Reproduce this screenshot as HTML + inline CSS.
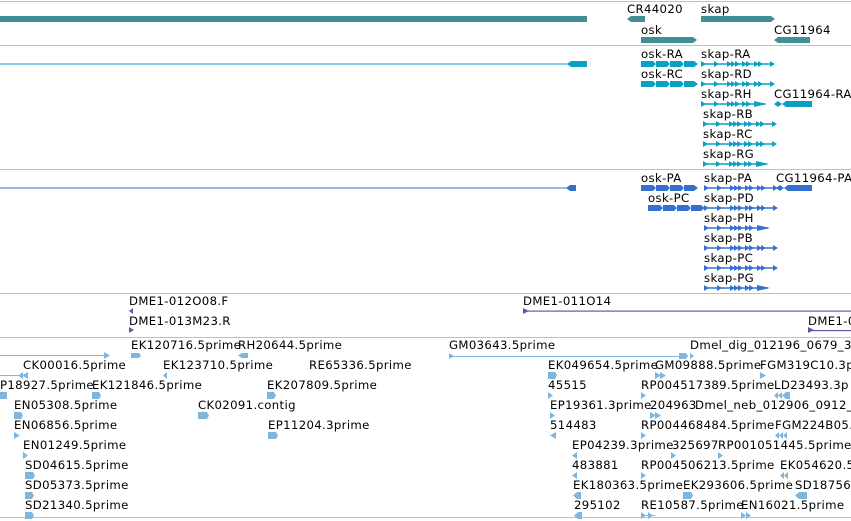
<!DOCTYPE html>
<html><head><meta charset="utf-8"><style>
html,body{margin:0;padding:0;background:#fff;width:851px;height:521px;overflow:hidden}
svg{display:block}
text{font-family:"DejaVu Sans","Liberation Sans",sans-serif;font-size:11.7px;letter-spacing:0.35px;fill:#000}
</style></head><body>
<svg width="851" height="521" viewBox="0 0 851 521" xmlns="http://www.w3.org/2000/svg">
<defs>
<g id="sk">
<line x1="0" y1="0" x2="72" y2="0" stroke-width="1.4" stroke="currentColor"/>
<polygon points="0,-3 5,0 0,3"/><polygon points="13,-3 18,0 13,3"/>
<polygon points="26,-3 31,0 26,3"/><polygon points="30,-3 35,0 30,3"/><polygon points="34,-3 39,0 34,3"/>
<polygon points="41,-3 46,0 41,3"/><polygon points="45,-3 50,0 45,3"/>
<polygon points="53,-3 58,0 53,3"/><polygon points="57,-3 62,0 57,3"/>
<polygon points="69,-3 74,0 69,3"/>
</g>
<g id="skh">
<line x1="0" y1="0" x2="64" y2="0" stroke-width="1.4" stroke="currentColor"/>
<polygon points="0,-3 5,0 0,3"/><polygon points="13,-3 18,0 13,3"/>
<polygon points="26,-3 31,0 26,3"/><polygon points="30,-3 35,0 30,3"/><polygon points="34,-3 39,0 34,3"/>
<polygon points="41,-3 46,0 41,3"/><polygon points="45,-3 50,0 45,3"/>
<polygon points="53,-3 66,0 53,3"/>
</g>
<g id="os">
<polygon points="0,-3 12,-3 15,0 12,3 0,3"/><polygon points="15,-3 26,-3 29,0 26,3 15,3"/>
<polygon points="29,-3 40,-3 43,0 40,3 29,3"/><polygon points="43,-3 53,-3 57,0 53,3 43,3"/>
</g>
</defs>
<g stroke="#c0c0c0" stroke-width="1">
<line x1="0" y1="1.5" x2="851" y2="1.5"/><line x1="0" y1="45.5" x2="851" y2="45.5"/>
<line x1="0" y1="169.5" x2="851" y2="169.5"/><line x1="0" y1="293.5" x2="851" y2="293.5"/>
<line x1="0" y1="337.5" x2="851" y2="337.5"/><line x1="0" y1="517.5" x2="851" y2="517.5"/>
</g>
<g fill="#428f93">
<rect x="0" y="16" width="587" height="6"/>
<polygon points="627,19 631,16 645,16 645,22 631,22"/>
<polygon points="701,16 771,16 775,19 771,22 701,22"/>
<polygon points="641,37 693,37 697,40 693,43 641,43"/>
<polygon points="774,40 778,37 810,37 810,43 778,43"/>
</g>
<text x="627" y="13">CR44020</text><text x="701" y="13">skap</text>
<text x="641" y="34">osk</text><text x="774" y="34">CG11964</text>
<g fill="#0aa0c4" color="#0aa0c4">
<rect x="0" y="63.5" width="570" height="1"/>
<polygon points="567,64 571,61 587,61 587,67 571,67"/>
<use href="#os" x="641" y="64"/><use href="#os" x="641" y="84"/>
<use href="#sk" x="701" y="64"/><use href="#sk" x="701" y="84"/>
<use href="#skh" x="701" y="104"/><use href="#sk" x="703" y="124"/>
<use href="#sk" x="703" y="144"/><use href="#skh" x="703" y="164"/>
<polygon points="774,104 778,101 782,104 786,101 812,101 812,107 786,107 782,104 778,107"/>
</g>
<text x="641" y="58">osk-RA</text><text x="641" y="78">osk-RC</text>
<text x="701" y="58">skap-RA</text><text x="701" y="78">skap-RD</text>
<text x="701" y="98">skap-RH</text><text x="703" y="118">skap-RB</text>
<text x="703" y="138">skap-RC</text><text x="703" y="158">skap-RG</text>
<text x="774" y="98">CG11964-RA</text>
<g fill="#3572d0" color="#3572d0">
<rect x="0" y="187.5" width="570" height="1"/>
<polygon points="566,188 570,185 576,185 576,191 570,191"/>
<use href="#os" x="641" y="188"/><use href="#os" x="648" y="208"/>
<use href="#sk" x="704" y="188"/><use href="#sk" x="704" y="208"/>
<use href="#skh" x="704" y="228"/><use href="#sk" x="704" y="248"/>
<use href="#sk" x="704" y="268"/><use href="#skh" x="704" y="288"/>
<polygon points="776,188 780,185 784,188 788,185 812,185 812,191 788,191 784,188 780,191"/>
</g>
<text x="641" y="182">osk-PA</text><text x="648" y="202">osk-PC</text>
<text x="704" y="182">skap-PA</text><text x="704" y="202">skap-PD</text>
<text x="704" y="222">skap-PH</text><text x="704" y="242">skap-PB</text>
<text x="704" y="262">skap-PC</text><text x="704" y="282">skap-PG</text>
<text x="776" y="182">CG11964-PA</text>
<g fill="#6f52a8">
<polygon points="129,311 133,308 133,314"/>
<polygon points="129,327 134,330 129,333"/>
<polygon points="523,308 529,311 523,314"/><rect x="523" y="310.5" width="328" height="1.2"/>
<polygon points="808,327 814,330 808,333"/><rect x="808" y="330" width="43" height="1.2"/>
</g>
<text x="129" y="305">DME1-012O08.F</text><text x="129" y="325">DME1-013M23.R</text>
<text x="523" y="305">DME1-011O14</text><text x="808" y="325">DME1-0</text>
<g fill="#7fb6de">
<rect x="0" y="355" width="108" height="1"/><polygon points="104,352 110,355.5 104,359"/>
<polygon points="131,353 139,353 141,355.5 139,358 131,358"/>
<polygon points="238,355.5 242,353 248,353 248,358 242,358"/>
<rect x="449" y="356" width="238" height="1"/><polygon points="449,353 454,356 449,359"/>
<polygon points="679,353 686,353 688,356 686,359 679,359"/><polygon points="690,353 694,356 690,359"/>
<rect x="0" y="375" width="28" height="1"/><polygon points="18,375.5 23,372 23,379"/><polygon points="22,375.5 28,372 28,379"/>
<polygon points="163,375.5 167,372 167,379"/>
<polygon points="548,372 555,372 557,375.5 555,379 548,379"/>
<polygon points="655,372 661,375.5 655,379"/><polygon points="660,372 666,375.5 660,379"/>
<polygon points="760,372 766,375.5 760,379"/>
<rect x="0" y="392" width="7" height="7"/>
<polygon points="92,392 99,392 101,395.5 99,399 92,399"/>
<polygon points="267,392 274,392 276,395.5 274,399 267,399"/>
<polygon points="548,392 553,395.5 548,399"/>
<polygon points="641,392 646,395.5 641,399"/>
<polygon points="774,395.5 778,392 778,399"/><polygon points="778,395.5 782,392 782,399"/><polygon points="782,395.5 786,392 790,392 790,399 786,399"/>
<polygon points="14,412 21,412 23,415.5 21,419 14,419"/>
<polygon points="198,412 207,412 209,415.5 207,419 198,419"/>
<polygon points="550,412 555,415.5 550,419"/>
<polygon points="650,412 656,415.5 650,419"/><polygon points="655,412 661,415.5 655,419"/>
<polygon points="14,432 20,435.5 14,439"/>
<polygon points="268,432 276,432 278,435.5 276,439 268,439"/>
<polygon points="550,435.5 556,432 556,439"/>
<polygon points="641,432 646,435.5 641,439"/>
<polygon points="775,435.5 779,432 779,439"/><polygon points="779,435.5 783,432 783,439"/><polygon points="783,435.5 787,432 787,439"/>
<polygon points="23,452 28,455.5 23,459"/>
<polygon points="572,455.5 577,452 577,459"/>
<polygon points="671,452 676,455.5 671,459"/><polygon points="718,452 723,455.5 718,459"/>
<polygon points="25,472 33,472 35,475.5 33,479 25,479"/>
<polygon points="572,475.5 577,472 577,479"/>
<polygon points="641,472 646,475.5 641,479"/>
<polygon points="780,475.5 784,472 784,479"/><polygon points="784,475.5 788,472 788,479"/>
<polygon points="25,492 32,492 34,495.5 32,499 25,499"/>
<polygon points="573,495.5 577,492 581,492 581,499 577,499"/>
<polygon points="683,492 691,492 693,495.5 691,499 683,499"/>
<polygon points="795,495.5 799,492 807,492 807,499 799,499"/>
<polygon points="25,512 32,512 34,515.5 32,519 25,519"/>
<polygon points="574,515.5 578,512 582,512 582,519 578,519"/>
<rect x="641" y="515" width="14" height="1"/><polygon points="641,512 646,515.5 641,519"/><polygon points="648,512 653,515.5 648,519"/>
<polygon points="741,512 746,515.5 741,519"/><polygon points="746,512 751,515.5 746,519"/>
</g>
<text x="131" y="349">EK120716.5prime</text><text x="238" y="349">RH20644.5prime</text>
<text x="449" y="349">GM03643.5prime</text><text x="690" y="349">Dmel_dig_012196_0679_3</text>
<text x="23" y="369">CK00016.5prime</text><text x="163" y="369">EK123710.5prime</text>
<text x="309" y="369">RE65336.5prime</text><text x="548" y="369">EK049654.5prime</text>
<text x="655" y="369">GM09888.5prime</text><text x="760" y="369">FGM319C10.3p</text>
<text x="0" y="389">P18927.5prime</text><text x="92" y="389">EK121846.5prime</text>
<text x="267" y="389">EK207809.5prime</text><text x="548" y="389">45515</text>
<text x="641" y="389">RP004517389.5prime</text><text x="774" y="389">LD23493.3p</text>
<text x="14" y="409">EN05308.5prime</text><text x="198" y="409">CK02091.contig</text>
<text x="550" y="409">EP19361.3prime</text><text x="650" y="409">204963</text><text x="695" y="409">Dmel_neb_012906_0912_</text>
<text x="14" y="429">EN06856.5prime</text><text x="268" y="429">EP11204.3prime</text>
<text x="550" y="429">514483</text><text x="641" y="429">RP004468484.5prime</text><text x="775" y="429">FGM224B05.</text>
<text x="23" y="449">EN01249.5prime</text><text x="572" y="449">EP04239.3prime</text>
<text x="672" y="449">325697</text><text x="718" y="449">RP001051445.5prime</text>
<text x="25" y="469">SD04615.5prime</text><text x="572" y="469">483881</text>
<text x="641" y="469">RP004506213.5prime</text><text x="780" y="469">EK054620.5</text>
<text x="25" y="489">SD05373.5prime</text><text x="573" y="489">EK180363.5prime</text>
<text x="683" y="489">EK293606.5prime</text><text x="795" y="489">SD18756</text>
<text x="25" y="509">SD21340.5prime</text><text x="574" y="509">295102</text>
<text x="641" y="509">RE10587.5prime</text><text x="741" y="509">EN16021.5prime</text>
</svg>
</body></html>
